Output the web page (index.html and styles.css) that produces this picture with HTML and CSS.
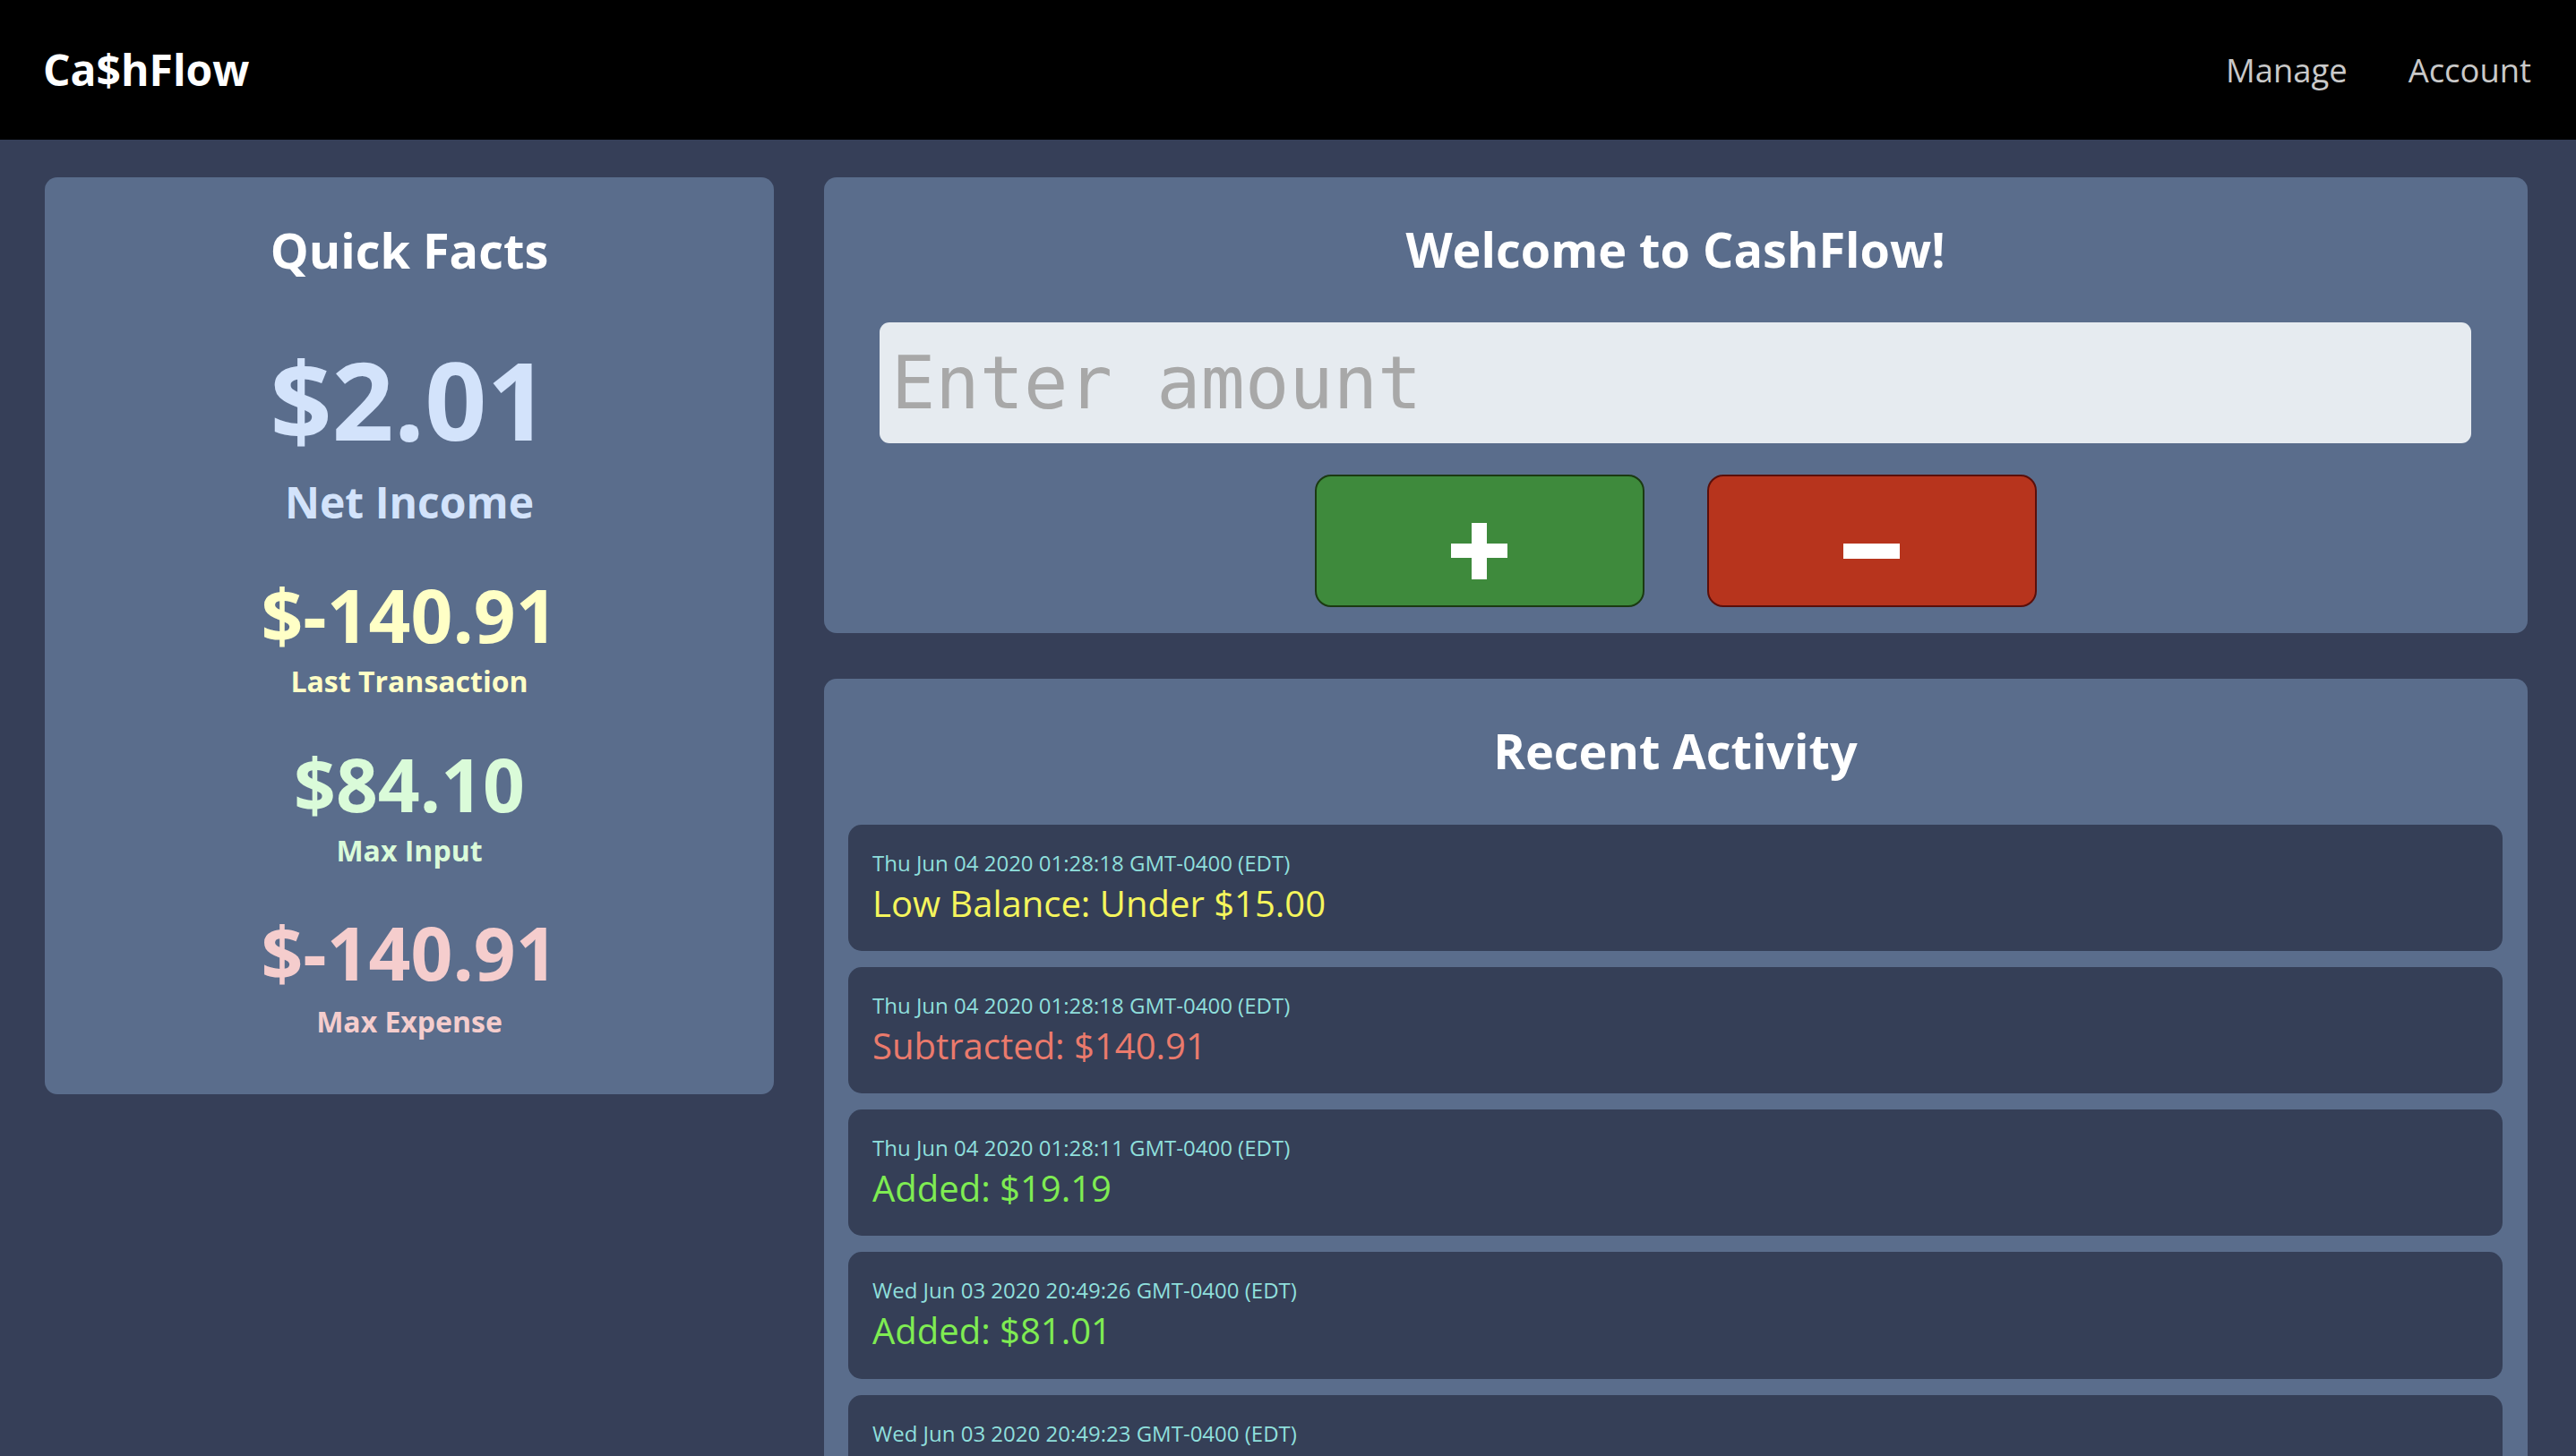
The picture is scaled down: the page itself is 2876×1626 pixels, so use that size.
FILE: index.html
```html
<!DOCTYPE html>
<html lang="en">
<head>
<meta charset="utf-8">
<title>Ca$hFlow</title>
<link rel="stylesheet" href="styles.css">
</head>
<body>
<nav class="topbar">
  <a class="brand" href="#">Ca$hFlow</a>
  <div class="links">
    <a class="link" href="#">Manage</a>
    <a class="link" href="#">Account</a>
  </div>
</nav>
<main class="layout">
  <section class="card facts">
    <h2 class="card-title">Quick Facts</h2>
    <div class="stat stat-net">
      <div class="value">$2.01</div>
      <div class="label">Net Income</div>
    </div>
    <div class="stat stat-last">
      <div class="value">$-140.91</div>
      <div class="label">Last Transaction</div>
    </div>
    <div class="stat stat-input">
      <div class="value">$84.10</div>
      <div class="label">Max Input</div>
    </div>
    <div class="stat stat-expense">
      <div class="value">$-140.91</div>
      <div class="label">Max Expense</div>
    </div>
  </section>
  <div class="right">
    <section class="card entry">
      <h2 class="card-title">Welcome to CashFlow!</h2>
      <input class="amount" type="text" placeholder="Enter amount">
      <div class="buttons">
        <button class="btn btn-add" type="button" aria-label="Add">
          <svg width="63" height="63" viewBox="0 0 63 63"><rect x="23" y="0" width="17" height="63" fill="#fff"/><rect x="0" y="23" width="63" height="16" fill="#fff"/></svg>
        </button>
        <button class="btn btn-sub" type="button" aria-label="Subtract">
          <svg width="63" height="17" viewBox="0 0 63 17"><rect x="0" y="0" width="63" height="17" fill="#fff"/></svg>
        </button>
      </div>
    </section>
    <section class="card activity">
      <h2 class="card-title">Recent Activity</h2>
      <ul class="items">
        <li class="item">
          <div class="date">Thu Jun 04 2020 01:28:18 GMT-0400 (EDT)</div>
          <div class="msg warn">Low Balance: Under $15.00</div>
        </li>
        <li class="item">
          <div class="date">Thu Jun 04 2020 01:28:18 GMT-0400 (EDT)</div>
          <div class="msg sub">Subtracted: $140.91</div>
        </li>
        <li class="item">
          <div class="date">Thu Jun 04 2020 01:28:11 GMT-0400 (EDT)</div>
          <div class="msg add">Added: $19.19</div>
        </li>
        <li class="item">
          <div class="date">Wed Jun 03 2020 20:49:26 GMT-0400 (EDT)</div>
          <div class="msg add">Added: $81.01</div>
        </li>
        <li class="item">
          <div class="date">Wed Jun 03 2020 20:49:23 GMT-0400 (EDT)</div>
        </li>
      </ul>
    </section>
  </div>
</main>
</body>
</html>
```
FILE: styles.css
```css
* { box-sizing: border-box; }
html, body { margin: 0; padding: 0; }
body {
  background: #363f58;
  font-family: "Open Sans", "Noto Sans", sans-serif;
  color: #fff;
  height: 1626px;
  overflow: hidden;
}
.topbar {
  height: 156px;
  background: #000;
  display: flex;
  align-items: center;
  justify-content: space-between;
  padding: 0 50px 0 48px;
}
.brand {
  color: #fff;
  text-decoration: none;
  font-weight: 700;
  font-size: 48px;
  line-height: 1;
}
.links { display: flex; gap: 68px; }
.link {
  color: #c9c9c9;
  text-decoration: none;
  font-size: 36.4px;
  line-height: 1;
}
.layout {
  display: grid;
  grid-template-columns: 814px 1fr;
  column-gap: 56px;
  padding: 42px 54px 0 50px;
  align-items: start;
}
.card {
  background: #5a6d8c;
  border-radius: 14px;
}
.card-title {
  margin: 0;
  text-align: center;
  font-weight: 700;
  font-size: 54px;
  line-height: 68px;
  color: #fff;
}
.facts {
  padding: 47px 0 62px;
  text-align: center;
}
.value {
  font-weight: 700;
  font-size: 82px;
  line-height: 1.2;
}
.label {
  font-weight: 700;
  font-size: 32px;
  line-height: 1.2;
  margin-top: 7px;
}
.stat { margin-top: 45px; }
.stat-net { margin-top: 60px; }
.stat-net .value { font-size: 121px; }
.stat-net .label { font-size: 48px; margin-top: 14px; }
.stat-net .value, .stat-net .label { color: #d3e3fb; }
.stat-last { margin-top: 47px; }
.stat-last .value, .stat-last .label { color: #ffffc6; }
.stat-input .value, .stat-input .label { color: #dafbd9; }
.stat-expense .value, .stat-expense .label { color: #f5cdcd; }
.stat-expense .label { margin-top: 9px; }

.right {
  display: flex;
  flex-direction: column;
  gap: 51px;
}
.entry {
  padding: 46px 63px 29px 62px;
  display: flex;
  flex-direction: column;
}
.amount {
  margin-top: 48px;
  height: 135px;
  width: 100%;
  border: none;
  outline: none;
  border-radius: 11px;
  background: #e6ebf0;
  padding: 0 13px;
  font-family: "DejaVu Sans Mono", "Liberation Mono", monospace;
  font-size: 82px;
  color: #333;
}
.amount::placeholder { color: #a8a8a8; }
.buttons {
  margin-top: 35px;
  display: flex;
  justify-content: center;
  gap: 70px;
}
.btn {
  width: 368px;
  height: 148px;
  border-radius: 18px;
  border: 2px solid;
  display: flex;
  align-items: center;
  justify-content: center;
  padding: 22px 0 0;
  cursor: pointer;
}
.btn svg { display: block; }
.btn-add { background: #3e8a3c; border-color: #1b3a12; }
.btn-sub { background: #b7341d; border-color: #5a0f0a; }

.activity {
  padding: 46px 28px 0 27px;
}
.items {
  list-style: none;
  margin: 49px 0 0;
  padding: 0;
  display: flex;
  flex-direction: column;
  gap: 18px;
}
.item {
  background: #353f57;
  border-radius: 15px;
  padding: 27px 27px 26px;
}
.date {
  font-size: 24px;
  line-height: 1.362;
  color: #8fdfdc;
}
.msg {
  font-size: 40px;
  line-height: 1.362;
  margin-top: 1px;
}
.warn { color: #f5f55c; }
.sub { color: #ea7a6c; }
.add { color: #7fec52; }
```
